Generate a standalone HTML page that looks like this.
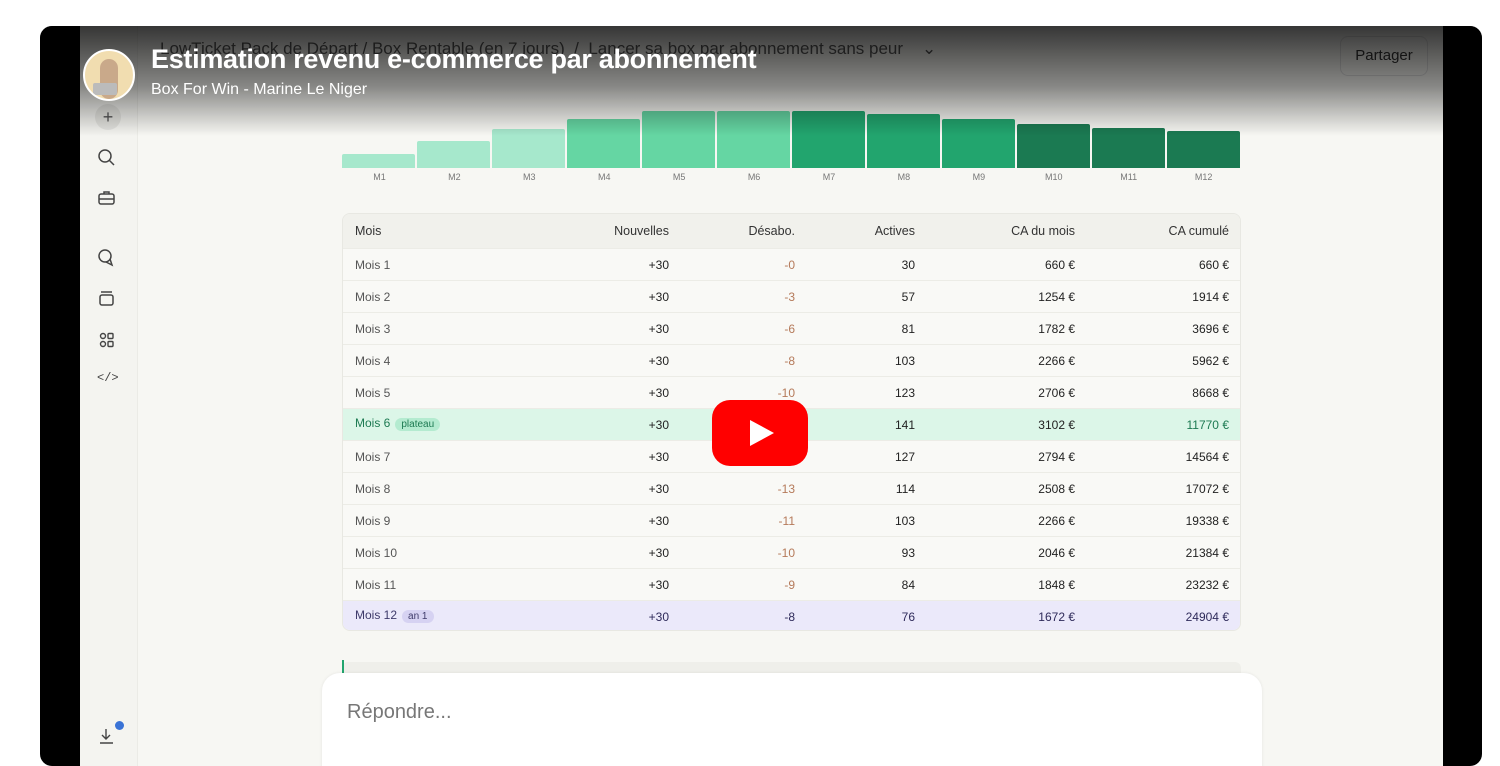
<!DOCTYPE html>
<html><head><meta charset="utf-8"><style>
*{margin:0;padding:0;box-sizing:border-box}
body{width:1500px;height:756px;background:#fff;position:relative;overflow:hidden;font-family:"Liberation Sans",sans-serif}
#v{position:absolute;left:40px;top:26px;width:1442px;height:740px;background:#000;border-radius:12px;overflow:hidden}
#s{position:absolute;left:40px;top:0;width:1363px;height:740px;background:#f7f7f3}
#side{position:absolute;left:0;top:0;width:58px;height:740px;background:#f4f4f0;border-right:1px solid #ebebe6}
.bar{position:absolute;bottom:0;width:73px;border-radius:2px 2px 0 0}
#tbl{position:absolute;left:262px;top:187px;width:899px;height:418px;border:1px solid #e8e8e2;border-radius:8px;overflow:hidden;background:#f9f9f6}
.r{position:absolute;left:0;width:899px;height:32px;border-top:1px solid #ecece6;font-size:12px;color:#222;white-space:nowrap}
.r span{position:absolute;top:9px}
.c0{left:12px;color:#555}
.c1{right:573px}.c2{right:447px;color:#b57a5a}.c3{right:327px}.c4{right:167px}.c5{right:13px}
.r span.tag{position:static;display:inline-block;font-size:10px;padding:1px 6px;border-radius:8px;margin-left:5px}
#grad{position:absolute;left:0;top:0;width:1442px;height:110px;background:linear-gradient(rgba(0,0,0,.78),rgba(0,0,0,.45) 55%,rgba(0,0,0,0))}
</style></head><body>
<div id="v">
<div id="s">
<div id="side">
<div style="position:absolute;left:15px;top:78px;width:26px;height:26px;border-radius:13px;background:#e4e4e0;text-align:center;line-height:26px;color:#555;font-size:18px">+</div>
<svg style="position:absolute;left:17px;top:122px" width="20" height="20" fill="none" stroke="#444" stroke-width="1.5"><circle cx="8" cy="8" r="6"/><path d="M12.5 12.5L17 17"/></svg>
<svg style="position:absolute;left:17px;top:163px" width="20" height="18" fill="none" stroke="#444" stroke-width="1.5"><rect x="2" y="5" width="15" height="10" rx="2"/><path d="M7 5V3h5v2M2 10h15"/></svg>
<svg style="position:absolute;left:17px;top:222px" width="20" height="20" fill="none" stroke="#444" stroke-width="1.5"><circle cx="8" cy="8" r="6"/><path d="M9 14l6 3-2-6"/></svg>
<svg style="position:absolute;left:17px;top:263px" width="20" height="20" fill="none" stroke="#444" stroke-width="1.5"><rect x="3" y="6" width="13" height="10" rx="2"/><path d="M4 3h11"/></svg>
<svg style="position:absolute;left:17px;top:304px" width="20" height="20" fill="none" stroke="#444" stroke-width="1.4"><circle cx="6" cy="6" r="2.5"/><circle cx="6" cy="14" r="2.5"/><rect x="11" y="3.5" width="5" height="5" rx="1"/><rect x="11" y="11.5" width="5" height="5" rx="1"/></svg>
<div style="position:absolute;left:17px;top:345px;font-size:12px;color:#444;font-family:'Liberation Mono',monospace">&lt;/&gt;</div>
<svg style="position:absolute;left:17px;top:700px" width="20" height="20" fill="none" stroke="#444" stroke-width="1.4"><path d="M9 3v10M5 9l4 4 4-4M3 17h13"/></svg>
<div style="position:absolute;left:35px;top:695px;width:9px;height:9px;border-radius:5px;background:#3a73d6"></div>
</div>
<div style="position:absolute;left:80px;top:13px;font-size:17px;color:#555;white-space:nowrap">LowTicket Pack de Départ / Box Rentable (en 7 jours) &nbsp;/ &nbsp;Lancer sa box par abonnement sans peur &nbsp;&nbsp;&nbsp;⌄</div>
<div style="position:absolute;left:1260px;top:10px;width:88px;height:40px;border:1px solid #ddd;border-radius:8px;font-size:15px;color:#333;text-align:center;line-height:38px">Partager</div>
<div style="position:absolute;left:262px;top:84px;width:899px;height:58px">
<div class="bar" style="left:0;height:14px;background:#a6e8cc"></div>
<div class="bar" style="left:75px;height:27px;background:#a6e8cc"></div>
<div class="bar" style="left:150px;height:39px;background:#a6e8cc"></div>
<div class="bar" style="left:225px;height:49px;background:#65d6a3"></div>
<div class="bar" style="left:300px;height:57px;background:#65d6a3"></div>
<div class="bar" style="left:375px;height:57px;background:#65d6a3"></div>
<div class="bar" style="left:450px;height:57px;background:#22a56e"></div>
<div class="bar" style="left:525px;height:54px;background:#22a56e"></div>
<div class="bar" style="left:600px;height:49px;background:#22a56e"></div>
<div class="bar" style="left:675px;height:44px;background:#1b7a52"></div>
<div class="bar" style="left:750px;height:40px;background:#1b7a52"></div>
<div class="bar" style="left:825px;height:37px;background:#1b7a52"></div>
</div>
<div style="position:absolute;left:262px;top:146px;width:899px;font-size:9px;color:#777;display:flex">
<span style="width:75px;text-align:center">M1</span><span style="width:75px;text-align:center">M2</span><span style="width:75px;text-align:center">M3</span><span style="width:75px;text-align:center">M4</span><span style="width:75px;text-align:center">M5</span><span style="width:75px;text-align:center">M6</span><span style="width:75px;text-align:center">M7</span><span style="width:75px;text-align:center">M8</span><span style="width:75px;text-align:center">M9</span><span style="width:75px;text-align:center">M10</span><span style="width:75px;text-align:center">M11</span><span style="width:75px;text-align:center">M12</span></div>
<div id="tbl">
<div class="r" style="top:0;height:34px;border:0;background:#f1f1ec;color:#333;font-size:12.5px"><span class="c0" style="top:10px;color:#333">Mois</span><span class="c1" style="top:10px">Nouvelles</span><span class="c2" style="top:10px;color:#333">Désabo.</span><span class="c3" style="top:10px">Actives</span><span class="c4" style="top:10px">CA du mois</span><span class="c5" style="top:10px">CA cumulé</span></div>
<div class="r" style="top:34px"><span class="c0">Mois 1</span><span class="c1">+30</span><span class="c2">-0</span><span class="c3">30</span><span class="c4">660 €</span><span class="c5">660 €</span></div>
<div class="r" style="top:66px"><span class="c0">Mois 2</span><span class="c1">+30</span><span class="c2">-3</span><span class="c3">57</span><span class="c4">1254 €</span><span class="c5">1914 €</span></div>
<div class="r" style="top:98px"><span class="c0">Mois 3</span><span class="c1">+30</span><span class="c2">-6</span><span class="c3">81</span><span class="c4">1782 €</span><span class="c5">3696 €</span></div>
<div class="r" style="top:130px"><span class="c0">Mois 4</span><span class="c1">+30</span><span class="c2">-8</span><span class="c3">103</span><span class="c4">2266 €</span><span class="c5">5962 €</span></div>
<div class="r" style="top:162px"><span class="c0">Mois 5</span><span class="c1">+30</span><span class="c2">-10</span><span class="c3">123</span><span class="c4">2706 €</span><span class="c5">8668 €</span></div>
<div class="r" style="top:194px;background:#dcf6e8"><span class="c0" style="top:7px;color:#1d7a52">Mois 6<span class="tag" style="background:#b4ebd0;color:#1d7a52">plateau</span></span><span class="c1">+30</span><span class="c2">-12</span><span class="c3">141</span><span class="c4">3102 €</span><span class="c5" style="color:#1d7a52">11770 €</span></div>
<div class="r" style="top:226px"><span class="c0">Mois 7</span><span class="c1">+30</span><span class="c2">-14</span><span class="c3">127</span><span class="c4">2794 €</span><span class="c5">14564 €</span></div>
<div class="r" style="top:258px"><span class="c0">Mois 8</span><span class="c1">+30</span><span class="c2">-13</span><span class="c3">114</span><span class="c4">2508 €</span><span class="c5">17072 €</span></div>
<div class="r" style="top:290px"><span class="c0">Mois 9</span><span class="c1">+30</span><span class="c2">-11</span><span class="c3">103</span><span class="c4">2266 €</span><span class="c5">19338 €</span></div>
<div class="r" style="top:322px"><span class="c0">Mois 10</span><span class="c1">+30</span><span class="c2">-10</span><span class="c3">93</span><span class="c4">2046 €</span><span class="c5">21384 €</span></div>
<div class="r" style="top:354px"><span class="c0">Mois 11</span><span class="c1">+30</span><span class="c2">-9</span><span class="c3">84</span><span class="c4">1848 €</span><span class="c5">23232 €</span></div>
<div class="r" style="top:386px;background:#ebe9fa;color:#2e2a5a"><span class="c0" style="top:7px;color:#3e3a6a">Mois 12<span class="tag" style="background:#d6d2f2;color:#3e3a6a">an 1</span></span><span class="c1">+30</span><span class="c2" style="color:#2e2a5a">-8</span><span class="c3">76</span><span class="c4">1672 €</span><span class="c5">24904 €</span></div>
</div>
<div style="position:absolute;left:262px;top:636px;width:899px;height:14px;background:#efefea;border-radius:6px 6px 0 0"></div>
<div style="position:absolute;left:262px;top:634px;width:2px;height:13px;background:#22a56e"></div>
<div style="position:absolute;left:242px;top:647px;width:940px;height:110px;background:#fff;border-radius:18px;box-shadow:0 0 3px rgba(0,0,0,.08)"><div style="position:absolute;left:25px;top:28px;font-size:20px;color:#777">Répondre...</div></div>
</div>
<div id="grad"></div>
<div style="position:absolute;left:43px;top:23px;width:52px;height:52px;border-radius:26px;background:#f1ddb0;border:2px solid #fff;overflow:hidden"><div style="position:absolute;left:15px;top:8px;width:18px;height:40px;border-radius:9px;background:#c9a98a"></div><div style="position:absolute;left:8px;top:32px;width:24px;height:12px;background:#bbb;border-radius:2px"></div></div>
<div style="position:absolute;left:111px;top:18px;font-size:27px;font-weight:bold;color:#fff;letter-spacing:-0.3px;white-space:nowrap">Estimation revenu e-commerce par abonnement</div>
<div style="position:absolute;left:111px;top:55px;font-size:16px;color:#fff">Box For Win - Marine Le Niger</div>
<div style="position:absolute;left:672px;top:374px;width:96px;height:66px;background:#f00;border-radius:18px"></div>
<svg style="position:absolute;left:708px;top:392px" width="28" height="30"><path d="M2 2L26 15L2 28Z" fill="#fff"/></svg>
</div>
</body></html>
